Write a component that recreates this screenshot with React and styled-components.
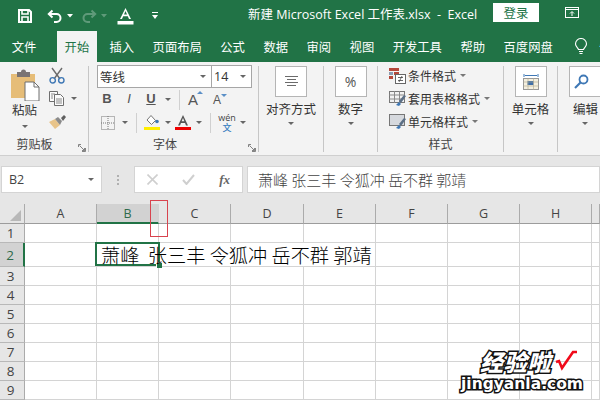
import React from 'react';
import styled, { createGlobalStyle } from 'styled-components';

const GlobalStyle = createGlobalStyle`
  html, body {
    margin: 0;
    padding: 0;
    background: #fff;
  }
  body {
    font-family: 'Open Sans', 'Noto Sans CJK SC', sans-serif;
  }
`;

const GREEN = '#217346';
const COLS = ['A', 'B', 'C', 'D', 'E', 'F', 'G', 'H', ''];
const ROWS = [1, 2, 3, 4, 5, 6, 7, 8, 9];
const TABS = ['文件', '开始', '插入', '页面布局', '公式', '数据', '审阅', '视图', '开发工具', '帮助', '百度网盘'];

const Page = styled.div`
  position: relative;
  width: 600px;
  height: 400px;
  overflow: hidden;
  display: flex;
  flex-direction: column;
`;

/* title bar */
const TitleBar = styled.div`
  height: 31px;
  flex: none;
  background: ${GREEN};
  display: flex;
  align-items: center;
  color: #fff;
`;

const Qat = styled.div`
  width: 248px;
  flex: none;
  display: flex;
  align-items: center;
  padding-left: 17px;
  box-sizing: border-box;
`;

const QatItem = styled.span`
  display: inline-flex;
  margin-left: ${(p) => p.$ml || 0}px;
  opacity: ${(p) => (p.$faded ? 0.28 : 1)};
`;

const DocTitle = styled.div`
  width: 245px;
  flex: none;
  font-size: 12.5px;
  margin-top: -5px;
  white-space: pre;
`;

const Login = styled.button`
  width: 46px;
  height: 19px;
  border: 0;
  padding: 0;
  background: #fff;
  color: ${GREEN};
  font: 12.5px 'Noto Sans CJK SC', sans-serif;
  margin-top: -6px;
`;

const TitleIcon = styled.span`
  display: inline-flex;
  margin-left: 26px;
  margin-top: -6px;
`;

/* tabs */
const TabRow = styled.div`
  height: 31px;
  flex: none;
  background: ${GREEN};
  display: flex;
  align-items: stretch;
  padding-left: 2.5px;
  overflow: hidden;
`;

const Tab = styled.div`
  display: flex;
  align-items: center;
  white-space: nowrap;
  font-size: 12.3px;
  padding: ${(p) => (p.$active ? '0 8px' : '0 9.25px')};
  margin: ${(p) => (p.$active ? '0 3px 0 11px' : '0')};
  background: ${(p) => (p.$active ? '#f3f3f3' : 'transparent')};
  color: ${(p) => (p.$active ? GREEN : '#fff')};
`;

const TabTail = styled.div`
  display: flex;
  align-items: center;
  gap: 11px;
  color: #fff;
  font-size: 12.3px;
  margin-left: 12px;
  white-space: nowrap;
`;

/* ribbon */
const Ribbon = styled.div`
  height: 94px;
  flex: none;
  background: #f3f3f3;
  border-bottom: 1px solid #cfcfcf;
  display: flex;
  box-sizing: border-box;
`;

const Group = styled.div`
  position: relative;
  width: ${(p) => p.$w}px;
  flex: none;
  box-sizing: border-box;
  margin: 4px 0 3px;
  border-right: ${(p) => (p.$last ? 'none' : '1px solid #c6c6c6')};
  display: flex;
  flex-direction: column;
  color: #333;
  font-size: 12px;
`;

const GroupBody = styled.div`
  flex: 1;
  min-height: 0;
  display: flex;
`;

const GroupLabel = styled.div`
  height: 18px;
  margin-bottom: -3px;
  line-height: 16px;
  text-align: center;
  font-size: 12px;
  color: #444;
  padding-right: ${(p) => p.$pr || 0}px;
`;

const Launcher = styled.span`
  position: absolute;
  right: 2px;
  bottom: 0;
  display: inline-flex;
`;

const Caret = styled.i`
  display: inline-block;
  width: 0;
  height: 0;
  border-left: 3px solid transparent;
  border-right: 3px solid transparent;
  border-top: 3px solid #666;
  margin-left: ${(p) => p.$ml || 0}px;
  flex: none;
`;

const ClipLeft = styled.div`
  width: 49px;
  flex: none;
  display: flex;
  flex-direction: column;
  align-items: center;
  padding-top: 3px;
  font-size: 12.5px;
  line-height: 16px;
  color: #333;
  & > span { margin-top: 2px; }
  & > ${Caret} { margin-top: 6px; }
`;

const ClipRight = styled.div`
  display: flex;
  flex-direction: column;
  gap: 7px;
  padding-top: 1px;
`;

const ClipItem = styled.div`
  display: flex;
  align-items: center;
  height: 16px;
`;

const FontColumn = styled.div`
  flex: 1;
  padding: 0 0 0 8px;
  display: flex;
  flex-direction: column;
`;

const SelectRow = styled.div`
  display: flex;
  height: 23px;
  margin-top: -1px;
`;

const SelectBox = styled.div`
  width: ${(p) => p.$w}px;
  box-sizing: border-box;
  margin-left: ${(p) => (p.$join ? '-1px' : 0)};
  border: 1px solid #a6a6a6;
  background: #fff;
  display: flex;
  align-items: center;
  justify-content: space-between;
  padding: 0 5px 0 2px;
  font-size: 12.5px;
  color: #333;
`;

const ToolRow = styled.div`
  display: flex;
  align-items: center;
  height: 23px;
  padding-left: ${(p) => p.$pl || 0}px;
`;

const ToolGlyph = styled.span`
  display: inline-flex;
  justify-content: center;
  width: ${(p) => p.$w || 16}px;
  margin-left: ${(p) => p.$ml || 0}px;
  margin-top: -2px;
  font-family: 'Liberation Sans', sans-serif;
  font-size: 13px;
  font-style: ${(p) => (p.$italic ? 'italic' : 'normal')};
  font-weight: ${(p) => (p.$bold ? 'bold' : 'normal')};
  text-decoration: ${(p) => (p.$under ? 'underline' : 'none')};
  color: #555;
`;

const ToolIcon = styled.span`
  display: inline-flex;
  margin-left: ${(p) => p.$ml || 0}px;
`;

const ToolSep = styled.span`
  width: 1px;
  height: 20px;
  background: #d0d0d0;
  margin-left: ${(p) => p.$ml}px;
`;

const GrowA = styled.span`
  position: relative;
  display: inline-flex;
  margin-left: ${(p) => p.$ml}px;
  font: ${(p) => p.$size}px 'Liberation Sans', sans-serif;
  color: #555;
  &::after {
    content: '';
    position: absolute;
    right: ${(p) => p.$tipRight}px;
    top: ${(p) => (p.$down ? 1 : 0)}px;
    border-left: 3px solid transparent;
    border-right: 3px solid transparent;
    ${(p) => (p.$down ? 'border-top: 3px solid #5b8fc7;' : 'border-bottom: 3px solid #5b8fc7;')}
  }
`;

const Wen = styled.span`
  display: inline-flex;
  flex-direction: column;
  align-items: center;
  margin-left: 8px;
  width: 16px;
  font: 9px/10px 'Open Sans', sans-serif;
  color: #444;
  & b {
    font: 500 9px/10px 'Noto Sans CJK SC', sans-serif;
    color: #3a7fc1;
  }
`;

const BigGroup = styled.div`
  display: flex;
  flex-direction: column;
  align-items: center;
  flex: 1;
  font-size: 12.5px;
  line-height: 16px;
  color: #333;
  white-space: nowrap;
  & > ${Caret} { margin-top: 4px; }
`;

const EditGroup = styled(BigGroup)`
  align-items: flex-start;
  padding-left: 15px;
`;

const BigButton = styled.div`
  width: 32px;
  height: 31px;
  box-sizing: border-box;
  background: #fff;
  border: 1px solid #b5b5b5;
  display: flex;
  align-items: center;
  justify-content: center;
  margin-bottom: 5px;
  font: 14px 'Open Sans', sans-serif;
  color: #555;
`;

const EditButton = styled(BigButton)`
  width: 38px;
  margin-left: -4px;
  border-right: 0;
  padding-right: 14px;
`;

const StyleList = styled.div`
  display: flex;
  flex-direction: column;
  gap: 4px;
  padding: 0 0 0 11px;
`;

const StyleRow = styled.div`
  display: flex;
  align-items: center;
  height: 19px;
  font-size: 12px;
  color: #333;
  white-space: nowrap;
  & svg { margin-right: 2px; flex: none; }
  & ${Caret} { border-top-color: #777; }
`;

/* formula bar */
const FormulaBar = styled.div`
  height: 48px;
  flex: none;
  background: #e6e6e6;
  display: flex;
  align-items: flex-start;
  padding: 10px 0 0 1px;
  box-sizing: border-box;
`;

const FieldBox = styled.div`
  height: 27px;
  box-sizing: border-box;
  background: #fff;
  border: 1px solid #d4d4d4;
  display: flex;
  align-items: center;
  width: ${(p) => p.$w}px;
  flex: ${(p) => (p.$grow ? 1 : 'none')};
  margin-left: ${(p) => p.$ml || 0}px;
  padding: 0 ${(p) => p.$px || 0}px;
  justify-content: ${(p) => (p.$between ? 'space-between' : 'flex-start')};
`;

const NameText = styled.span`
  font-size: 12.5px;
  color: #444;
`;

const Dots = styled.span`
  display: flex;
  flex-direction: column;
  gap: 2px;
  width: 2px;
  margin: 9px 0 0 15px;
  & i { width: 2px; height: 2px; background: #b0b0b0; }
`;

const FxText = styled.span`
  font: italic bold 13px 'Liberation Serif', serif;
  color: #666;
`;

const FormulaText = styled.span`
  font-size: 15px;
  font-weight: 300;
  font-family: 'Noto Sans CJK SC', sans-serif;
  color: #444;
  white-space: pre;
`;

/* sheet */
const Sheet = styled.div`
  flex: 1;
  display: grid;
  grid-template-columns: 25px 72px 62px 72px 73px 72px 72px 72px 72px 1fr;
  grid-template-rows: 20px 19px 24px repeat(7, 19px);
  overflow: hidden;
  background: #fff;
`;

const ColHead = styled.div`
  background: ${(p) => (p.$sel ? '#d2d2d2' : '#e6e6e6')};
  border-right: 1px solid ${(p) => (p.$sel ? '#d2d2d2' : '#ababab')};
  border-bottom: ${(p) => (p.$sel ? `2px solid ${GREEN}` : '1px solid #9c9c9c')};
  display: flex;
  align-items: center;
  justify-content: center;
  font-size: 12.5px;
  color: ${(p) => (p.$sel ? '#2f6b4c' : '#444')};
  box-sizing: border-box;
`;

const Corner = styled(ColHead)`
  border-right-color: #ababab;
  position: relative;
  &::after {
    content: '';
    position: absolute;
    right: 3px;
    bottom: 2px;
    border-left: 11px solid transparent;
    border-bottom: 11px solid #b8b8b8;
  }
`;

const RowHead = styled.div`
  background: ${(p) => (p.$sel ? '#d2d2d2' : '#e6e6e6')};
  border-right: ${(p) => (p.$sel ? `2px solid ${GREEN}` : '1px solid #ababab')};
  border-bottom: 1px solid #b8b8b8;
  box-sizing: border-box;
  display: flex;
  align-items: center;
  justify-content: center;
  font-size: 13.5px;
  padding-right: 3px;
  color: ${(p) => (p.$sel ? '#2f6b4c' : '#444')};
`;

const Cell = styled.div`
  position: relative;
  box-sizing: border-box;
  border-bottom: 1px solid #d4d4d4;
  border-right: ${(p) => (p.$flow ? 'none' : '1px solid #d4d4d4')};
`;

const CellText = styled.span`
  position: absolute;
  left: 4px;
  top: 0;
  z-index: 2;
  font: 300 19.2px/25px 'Noto Sans CJK SC', sans-serif;
  white-space: pre;
  color: #000;
`;

const Selection = styled.div`
  position: absolute;
  inset: -1px -1px 0 -2px;
  border: 2px solid ${GREEN};
  z-index: 1;
  &::after {
    content: '';
    position: absolute;
    right: -4px;
    bottom: -4px;
    width: 5px;
    height: 5px;
    background: ${GREEN};
    border: 1px solid #fff;
    border-right: 0;
    border-bottom: 0;
    z-index: 3;
  }
`;

/* overlays */
const Marker = styled.div`
  position: absolute;
  left: 150px;
  top: 200px;
  width: 18px;
  height: 37px;
  box-sizing: border-box;
  border: 1px solid #d8434e;
  z-index: 3;
`;

const Watermark = styled.div`
  position: absolute;
  left: 461px;
  top: 349px;
  width: 125px;
  z-index: 4;
  color: #fff;
  paint-order: stroke fill;
  -webkit-text-stroke: 3px #111;
  line-height: 1;
  white-space: nowrap;
`;

const MarkCn = styled.div`
  display: flex;
  align-items: center;
  padding-left: 19px;
  font: italic 900 23px/25px 'Noto Sans CJK SC', sans-serif;
  letter-spacing: 0.7px;
  & svg { margin-left: 4px; }
`;

const MarkEn = styled.div`
  font: bold 15.5px/20px 'DejaVu Sans', sans-serif;
`;

/* drawings */
const SaveIcon = () => (
  <svg width="16" height="16" viewBox="0 0 16 16" fill="none" stroke="#fff" strokeWidth="2">
    <path d="M2 2h10l2 2v10H2z" />
    <path d="M5 2v4h6V2M5 14v-5h6v5" strokeWidth="1.6" />
  </svg>
);

const UndoIcon = ({ flip }) => (
  <svg width="16" height="14" viewBox="0 0 16 14" fill="none" stroke="#fff" strokeWidth="2" transform={flip ? 'scale(-1 1)' : undefined}>
    <path d="M5.5 1.5L1.8 5l3.7 3.5" />
    <path d="M2 5h7.5a4 4 0 0 1 0 8H7" />
  </svg>
);

const SmallDown = ({ color = '#fff' }) => (
  <svg width="6" height="4" viewBox="0 0 6 4"><path d="M0 0h6L3 3.5z" fill={color} /></svg>
);

const FontAIcon = () => (
  <svg width="17" height="18" viewBox="0 0 17 18">
    <path d="M8.5 1L3 12h2l1.2-2.8h4.6L12 12h2zM7 7.5l1.5-3.6L10 7.5z" fill="#fff" />
    <rect x="0.5" y="14" width="16" height="3.5" fill="#fff" />
  </svg>
);

const CustomizeIcon = () => (
  <svg width="6" height="9" viewBox="0 0 6 9">
    <rect y="1" width="6" height="1" fill="#fff" />
    <path d="M0 4h6L3 8z" fill="#fff" />
  </svg>
);

const RestoreIcon = () => (
  <svg width="14" height="12" viewBox="0 0 14 12" fill="none" stroke="#fff">
    <rect x="0.5" y="0.5" width="13" height="10" />
    <path d="M0.5 2.5h13M7 5v4M5 6.5l2-2 2 2" />
  </svg>
);

const BulbIcon = () => (
  <svg width="14" height="17" viewBox="0 0 14 17" fill="none" stroke="#fff" strokeWidth="1.1">
    <path d="M4.5 11.5C4 9.5 1.5 8.5 1.5 6a5.5 5.5 0 0 1 11 0c0 2.5-2.5 3.5-3 5.5z" />
    <path d="M5 13.5h4M5.5 15.5h3" />
  </svg>
);

const PasteIcon = () => (
  <svg width="30" height="32" viewBox="0 0 30 32">
    <path d="M1 5h24v24H1z" fill="#e6bd78" />
    <path d="M7 3h4a2.500 2.500 0 0 1 5 0h4v5H7z" fill="#7a7474" />
    <path d="M15 13h9l5 5v14H15z" fill="#fff" stroke="#6f6f6f" />
    <path d="M24 13v5h5" fill="none" stroke="#6f6f6f" />
  </svg>
);

const ScissorsIcon = () => (
  <svg width="16" height="17" viewBox="0 0 16 17" fill="none">
    <path d="M3 1l8 11M13 1L5 12" stroke="#6b6b6b" strokeWidth="1.4" />
    <circle cx="3.7" cy="13.3" r="2.7" stroke="#3f78b5" strokeWidth="1.4" />
    <circle cx="12.3" cy="13.3" r="2.7" stroke="#3f78b5" strokeWidth="1.4" />
  </svg>
);

const CopyIcon = () => (
  <svg width="16" height="15" viewBox="0 0 16 15" fill="#fbfbfb" stroke="#6f6f6f">
    <path d="M0.5 0.5h8v10h-8z" />
    <path d="M5.5 3.5h6l3 3v8h-9z" />
    <path d="M7 8h6M7 10h6M7 12h6M2 3h4M2 5h2M2 7h2" strokeWidth="0.8" />
  </svg>
);

const BrushIcon = () => (
  <svg width="17" height="15" viewBox="0 0 17 15">
    <path d="M0 8l6-3 5 6-5 4z" fill="#e8c48a" />
    <path d="M6 5l3-2 4 4-2 4z" fill="#8a8a8a" />
    <path d="M12 4l3-3 2 2-3 4z" fill="#5f5f5f" />
  </svg>
);

const LauncherIcon = () => (
  <svg width="8" height="8" viewBox="0 0 8 8" fill="none" stroke="#777" strokeWidth="0.9">
    <path d="M7.5 4v3.5H4M0.5 3V0.5H3M1.5 1.5l5 5M6.5 4v2.5H4" />
  </svg>
);

const BorderIcon = () => (
  <svg width="14" height="14" viewBox="0 0 14 14" fill="none" stroke="#777" strokeDasharray="1 1">
    <rect x="0.5" y="0.5" width="13" height="13" />
    <path d="M7 0v14M0 7h14" />
  </svg>
);

const FillIcon = () => (
  <svg width="16" height="15" viewBox="0 0 16 15">
    <path d="M7 0.5l4.500 5-4 4-4.500-4.500z" fill="#fff" stroke="#777" />
    <circle cx="13" cy="6.5" r="1.8" fill="#3f78b5" />
    <rect y="12" width="16" height="3.5" fill="#ffee00" />
  </svg>
);

const ColorAIcon = () => (
  <svg width="16" height="15" viewBox="0 0 16 15">
    <path d="M8 0L3 10.5h2l1-2.500h4l1 2.500h2zM6.700 6.300L8 3l1.300 3.300z" fill="#555" />
    <rect y="12" width="16" height="3.5" fill="#ee0000" />
  </svg>
);

const AlignIcon = () => (
  <svg width="13" height="11" viewBox="0 0 13 11" stroke="#6b6b6b">
    <path d="M0 0.5h13M2 3.5h9M0 6.5h13M2 9.5h9" />
  </svg>
);

const CondIcon = () => (
  <svg width="17" height="16" viewBox="0 0 17 16">
    <rect x="0" y="0" width="10" height="3" fill="#b5483a" />
    <rect x="0" y="4" width="4" height="3" fill="#8b9bb0" />
    <rect x="5" y="4" width="5" height="3" fill="#b5483a" />
    <rect x="0" y="8" width="4" height="3" fill="#b5483a" />
    <rect x="6.5" y="6.5" width="10" height="9" fill="#fff" stroke="#666" />
    <path d="M9 9.5h5M9 12.5h5M10 14l3-6" stroke="#444" strokeWidth="0.8" fill="none" />
  </svg>
);

const TableStyleIcon = ({ grid }) => (
  <svg width="17" height="15" viewBox="0 0 17 15">
    <rect x="0.5" y="0.5" width="15" height="11" fill={grid ? '#f2f2f2' : '#d6d9de'} stroke="#777" />
    {grid && <path d="M5.5 0v12M10.5 0v12M0 4h16M0 8h16" stroke="#8a8a8a" fill="none" />}
    <path d="M7 14l3-3 2 2-2 2z" fill="#3f78b5" />
    <path d="M10 10l5-6 2 1-5 7z" fill="#5b6f86" />
  </svg>
);

const CellsIcon = () => (
  <svg width="16" height="18" viewBox="0 0 16 18" fill="none">
    <path d="M1 1v3M15 1v3M2 2.5h12" stroke="#3f78b5" />
    <rect x="0.5" y="5.5" width="15" height="11" stroke="#999" fill="#f5f0df" />
    <rect x="4.5" y="8" width="6" height="4" fill="#3f6fa8" />
    <path d="M5 5v12M10.5 5v12M0 9h16M0 13h16" stroke="#b0a98f" strokeWidth="0.6" />
  </svg>
);

const SearchIcon = () => (
  <svg width="15" height="15" viewBox="0 0 15 15" fill="none">
    <circle cx="9.5" cy="5.5" r="4" stroke="#3f78b5" strokeWidth="1.8" />
    <path d="M6.5 8.500L1 14" stroke="#3f78b5" strokeWidth="2.2" />
  </svg>
);

const CrossIcon = () => (
  <svg width="11" height="11" viewBox="0 0 11 11" stroke="#cfcfcf" strokeWidth="1.6"><path d="M0.5 0.5l10 10M10.5 0.5l-10 10" /></svg>
);

const CheckIcon = () => (
  <svg width="13" height="11" viewBox="0 0 13 11" fill="none" stroke="#cfcfcf" strokeWidth="2"><path d="M1 6l3.500 4L12 1" /></svg>
);

const TickMark = () => (
  <svg width="23" height="23" viewBox="0 0 23 23" fill="none" stroke="#f00a1a">
    <path d="M1 12l3-1 3 7L18 2h4" strokeWidth="2.6" />
  </svg>
);

const BigToolButton = ({ label, children }) => (
  <BigGroup>
    <BigButton>{children}</BigButton>
    {label}
    <Caret />
  </BigGroup>
);

const App = () => (
  <Page>
    <GlobalStyle />
    <TitleBar>
      <Qat>
        <QatItem><SaveIcon /></QatItem>
        <QatItem $ml={14}><UndoIcon /></QatItem>
        <QatItem $ml={4}><SmallDown /></QatItem>
        <QatItem $ml={8} $faded><UndoIcon flip /></QatItem>
        <QatItem $ml={4} $faded><SmallDown /></QatItem>
        <QatItem $ml={10}><FontAIcon /></QatItem>
        <QatItem $ml={18}><CustomizeIcon /></QatItem>
      </Qat>
      <DocTitle>新建 Microsoft Excel 工作表.xlsx  -  Excel</DocTitle>
      <Login>登录</Login>
      <TitleIcon><RestoreIcon /></TitleIcon>
    </TitleBar>

    <TabRow>
      {TABS.map((t) => (
        <Tab key={t} $active={t === '开始'}>{t}</Tab>
      ))}
      <TabTail><BulbIcon />告诉我</TabTail>
    </TabRow>

    <Ribbon>
      <Group $w={89}>
        <GroupBody>
          <ClipLeft>
            <PasteIcon />
            <span>粘贴</span>
            <Caret />
          </ClipLeft>
          <ClipRight>
            <ClipItem><ScissorsIcon /></ClipItem>
            <ClipItem><CopyIcon /><Caret $ml={6} /></ClipItem>
            <ClipItem><BrushIcon /></ClipItem>
          </ClipRight>
        </GroupBody>
        <GroupLabel $pr={19}>剪贴板</GroupLabel>
        <Launcher><LauncherIcon /></Launcher>
      </Group>

      <Group $w={170}>
        <GroupBody>
          <FontColumn>
            <SelectRow>
              <SelectBox $w={115}>等线<Caret /></SelectBox>
              <SelectBox $w={41} $join>14<Caret /></SelectBox>
            </SelectRow>
            <ToolRow $pl={2}>
              <ToolGlyph $bold>B</ToolGlyph>
              <ToolGlyph $italic $ml={6}>I</ToolGlyph>
              <ToolGlyph $under $bold $ml={6}>U</ToolGlyph>
              <Caret $ml={6} />
              <ToolSep $ml={8} />
              <GrowA $size={15} $ml={8} $tipRight={-5}>A</GrowA>
              <GrowA $size={12} $ml={15} $tipRight={-6} $down>A</GrowA>
            </ToolRow>
            <ToolRow $pl={4}>
              <BorderIcon />
              <Caret $ml={7} />
              <ToolSep $ml={8} />
              <ToolIcon $ml={7}><FillIcon /></ToolIcon>
              <Caret $ml={5} />
              <ToolIcon $ml={4}><ColorAIcon /></ToolIcon>
              <Caret $ml={5} />
              <ToolSep $ml={8} />
              <Wen>wén<b>文</b></Wen>
              <Caret $ml={5} />
            </ToolRow>
          </FontColumn>
        </GroupBody>
        <GroupLabel $pr={17}>字体</GroupLabel>
        <Launcher><LauncherIcon /></Launcher>
      </Group>

      <Group $w={65}>
        <GroupBody>
          <BigToolButton label="对齐方式"><AlignIcon /></BigToolButton>
        </GroupBody>
      </Group>

      <Group $w={54}>
        <GroupBody>
          <BigToolButton label="数字">%</BigToolButton>
        </GroupBody>
      </Group>

      <Group $w={126}>
        <GroupBody>
          <StyleList>
            <StyleRow><CondIcon />条件格式<Caret $ml={4} /></StyleRow>
            <StyleRow><TableStyleIcon grid />套用表格格式<Caret $ml={4} /></StyleRow>
            <StyleRow><TableStyleIcon />单元格样式<Caret $ml={4} /></StyleRow>
          </StyleList>
        </GroupBody>
        <GroupLabel>样式</GroupLabel>
      </Group>

      <Group $w={54}>
        <GroupBody>
          <BigToolButton label="单元格"><CellsIcon /></BigToolButton>
        </GroupBody>
      </Group>

      <Group $w={42} $last>
        <GroupBody>
          <EditGroup>
            <EditButton><SearchIcon /></EditButton>
            编辑
            <Caret $ml={9} />
          </EditGroup>
        </GroupBody>
      </Group>
    </Ribbon>

    <FormulaBar>
      <FieldBox $w={101} $px={7} $between>
        <NameText>B2</NameText>
        <Caret />
      </FieldBox>
      <Dots><i /><i /><i /></Dots>
      <FieldBox $w={109} $ml={15} $px={12} $between>
        <CrossIcon />
        <CheckIcon />
        <FxText>fx</FxText>
      </FieldBox>
      <FieldBox $grow $ml={4} $px={10}>
        <FormulaText>萧峰 张三丰 令狐冲 岳不群 郭靖</FormulaText>
      </FieldBox>
    </FormulaBar>

    <Sheet>
      <Corner />
      {COLS.map((c, i) => (
        <ColHead key={i} $sel={c === 'B'}>{c}</ColHead>
      ))}
      {ROWS.map((r) => (
        <React.Fragment key={r}>
          <RowHead $sel={r === 2}>{r}</RowHead>
          {COLS.map((c, i) => {
            const isActive = r === 2 && c === 'B';
            const flow = r === 2 && (c === 'B' || c === 'C' || c === 'D');
            return (
              <Cell key={i} $flow={flow}>
                {isActive && <Selection />}
                {isActive && <CellText>萧峰  张三丰 令狐冲 岳不群 郭靖</CellText>}
              </Cell>
            );
          })}
        </React.Fragment>
      ))}
    </Sheet>

    <Marker />
    <Watermark>
      <MarkCn>经验啦<TickMark /></MarkCn>
      <MarkEn>jingyanla.com</MarkEn>
    </Watermark>
  </Page>
);

export default App;
